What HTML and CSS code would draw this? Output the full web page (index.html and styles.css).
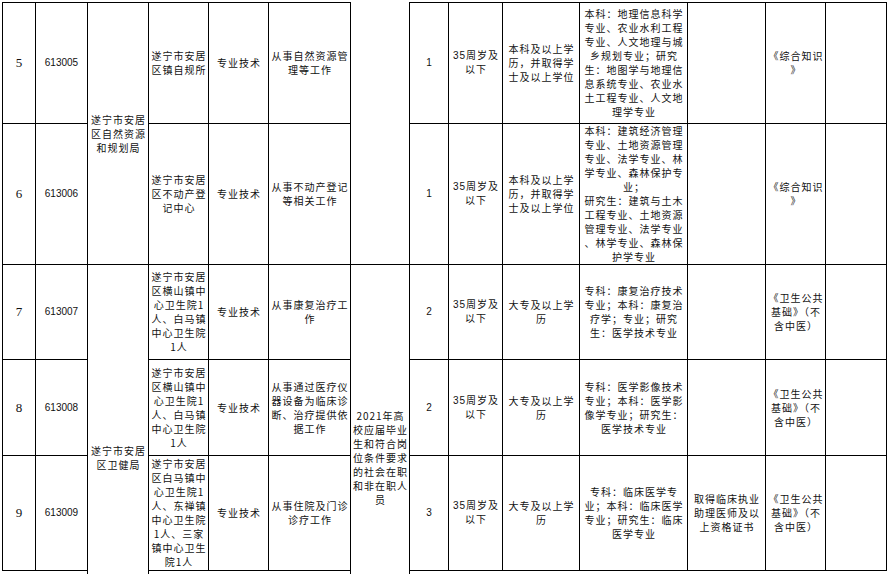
FILE: index.html
```html
<!DOCTYPE html>
<html lang="zh">
<head>
<meta charset="utf-8">
<title>岗位表</title>
<link rel="stylesheet" href="styles.css">
</head>
<body>
<div class="sheet">
<table class="grid">
<colgroup>
<col class="c-no"><col class="c-code"><col class="c-dept"><col class="c-unit"><col class="c-type"><col class="c-duty"><col class="c-obj"><col class="c-num"><col class="c-age"><col class="c-edu"><col class="c-major"><col class="c-other"><col class="c-exam"><col class="c-note">
</colgroup>
<tbody>
<tr class="r5">
<td class="no">5</td>
<td class="code">613005</td>
<td rowspan="2">遂宁市安居<br>区自然资源<br>和规划局</td>
<td>遂宁市安居<br>区镇自规所</td>
<td>专业技术</td>
<td>从事自然资源管<br>理等工作</td>
<td rowspan="2" class="notop"></td>
<td class="num">1</td>
<td class="age">35周岁及<br>以下</td>
<td>本科及以上学<br>历，并取得学<br>士及以上学位</td>
<td>本科：地理信息科学<br>专业、农业水利工程<br>专业、人文地理与城<br>乡规划专业；研究<br>生：地图学与地理信<br>息系统专业、农业水<br>土工程专业、人文地<br>理学专业</td>
<td></td>
<td>《综合知识<br>》</td>
<td></td>
</tr>
<tr class="r6">
<td class="no">6</td>
<td class="code">613006</td>
<td>遂宁市安居<br>区不动产登<br>记中心</td>
<td>专业技术</td>
<td>从事不动产登记<br>等相关工作</td>
<td class="num">1</td>
<td class="age">35周岁及<br>以下</td>
<td>本科及以上学<br>历，并取得学<br>士及以上学位</td>
<td>本科：建筑经济管理<br>专业、土地资源管理<br>专业、法学专业、林<br>学专业、森林保护专<br>业；<br>研究生：建筑与土木<br>工程专业、土地资源<br>管理专业、法学专业<br>、林学专业、森林保<br>护学专业</td>
<td></td>
<td>《综合知识<br>》</td>
<td></td>
</tr>
<tr class="r7">
<td class="no">7</td>
<td class="code">613007</td>
<td rowspan="4" class="nobottom">遂宁市安居<br>区卫健局</td>
<td>遂宁市安居<br>区横山镇中<br>心卫生院1<br>人、白马镇<br>中心卫生院<br>1人</td>
<td>专业技术</td>
<td>从事康复治疗工<br>作</td>
<td rowspan="4" class="nobottom">2021年高<br>校应届毕业<br>生和符合岗<br>位条件要求<br>的社会在职<br>和非在职人<br>员</td>
<td class="num">2</td>
<td class="age">35周岁及<br>以下</td>
<td>大专及以上学<br>历</td>
<td>专科：康复治疗技术<br>专业；本科：康复治<br>疗学；专业；研究<br>生：医学技术专业</td>
<td></td>
<td>《卫生公共<br>基础》（不<br>含中医）</td>
<td></td>
</tr>
<tr class="r8">
<td class="no">8</td>
<td class="code">613008</td>
<td>遂宁市安居<br>区横山镇中<br>心卫生院1<br>人、白马镇<br>中心卫生院<br>1人</td>
<td>专业技术</td>
<td>从事通过医疗仪<br>器设备为临床诊<br>断、治疗提供依<br>据工作</td>
<td class="num">2</td>
<td class="age">35周岁及<br>以下</td>
<td>大专及以上学<br>历</td>
<td>专科：医学影像技术<br>专业；本科：医学影<br>像学专业；研究生：<br>医学技术专业</td>
<td></td>
<td>《卫生公共<br>基础》（不<br>含中医）</td>
<td></td>
</tr>
<tr class="r9">
<td class="no">9</td>
<td class="code">613009</td>
<td>遂宁市安居<br>区白马镇中<br>心卫生院1<br>人、东禅镇<br>中心卫生院<br>1人、三家<br>镇中心卫生<br>院1人</td>
<td>专业技术</td>
<td>从事住院及门诊<br>诊疗工作</td>
<td class="num">3</td>
<td class="age">35周岁及<br>以下</td>
<td>大专及以上学<br>历</td>
<td>专科：临床医学专<br>业；本科：临床医学<br>专业；研究生：临床<br>医学专业</td>
<td>取得临床执业<br>助理医师及以<br>上资格证书</td>
<td>《卫生公共<br>基础》（不<br>含中医）</td>
<td></td>
</tr>
<tr class="r10">
<td class="blank"></td>
<td class="blank"></td>
<td class="blank"></td>
<td class="blank"></td>
<td class="blank"></td>
<td class="blank"></td>
<td class="blank"></td>
<td class="blank"></td>
<td class="blank"></td>
<td class="blank"></td>
<td class="blank"></td>
<td class="blank"></td>
</tr>
</tbody>
</table>
</div>
</body>
</html>
```
FILE: styles.css
```css
html, body {
  margin: 0;
  padding: 0;
  background: #fff;
}

.sheet {
  width: 891px;
  height: 574px;
  overflow: hidden;
  padding: 2px 0 0 2px;
  box-sizing: border-box;
}

.grid {
  border-collapse: collapse;
  table-layout: fixed;
  width: 884px;
  font-family: "Noto Sans CJK SC", "Liberation Sans", sans-serif;
  font-size: 10px;
  letter-spacing: 1px;
  line-height: 14px;
  color: #111;
}

.c-no { width: 33px; }
.c-code { width: 52px; }
.c-dept { width: 61px; }
.c-unit { width: 60px; }
.c-type { width: 60px; }
.c-duty { width: 82px; }
.c-obj { width: 59px; }
.c-num { width: 39px; }
.c-age { width: 54px; }
.c-edu { width: 77px; }
.c-major { width: 108px; }
.c-other { width: 78px; }
.c-exam { width: 60px; }
.c-note { width: 61px; }

.grid td {
  border: 1px solid #000;
  padding: 0 0 0 1px;
  text-align: center;
  vertical-align: middle;
  white-space: nowrap;
  overflow: hidden;
}

.r5 { height: 121px; }
.r6 { height: 141px; }
.r7 { height: 95px; }
.r8 { height: 96px; }
.r9 { height: 115px; }
.r10 { height: 80px; }

.grid td.notop { border-top: none; }
.grid td.nobottom { border-bottom: none; }
.grid td.blank {
  border-left: none;
  border-right: none;
  border-bottom: none;
}

.grid td.no {
  font-family: "Liberation Serif", serif;
  font-size: 13px;
  letter-spacing: 0;
  padding: 0;
}

.grid td.code,
.grid td.num {
  font-family: "Liberation Sans", sans-serif;
  font-size: 10px;
  letter-spacing: 0;
  padding: 0;
}

.grid td.age {
  font-family: "Liberation Sans", "Noto Sans CJK SC", sans-serif;
}
```
